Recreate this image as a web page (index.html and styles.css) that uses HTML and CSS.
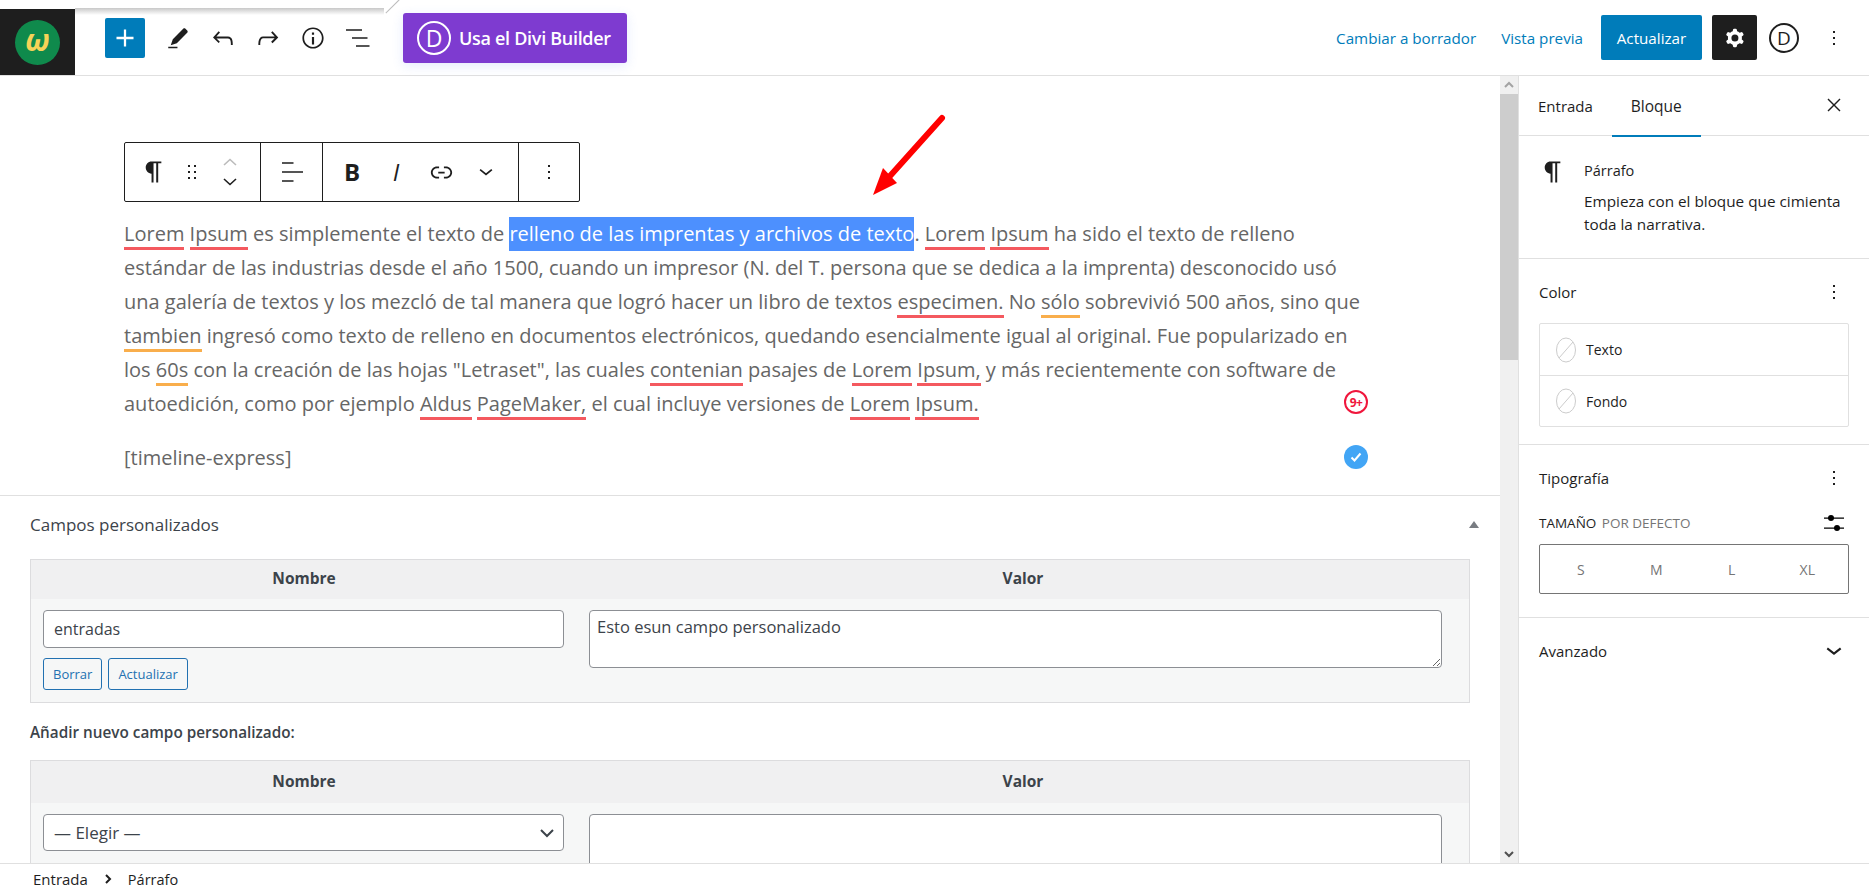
FILE: index.html
```html
<!DOCTYPE html>
<html lang="es">
<head>
    <meta charset="UTF-8">
    <title>Editar entrada</title>
    <link rel="stylesheet" href="styles.css">
</head>
<body>
    <div class="page">
        <!-- Top bar -->
        <header class="topbar">
            <div class="logo"><span class="logo-disc"><span class="logo-mark">ω</span></span></div>
            <button class="add-btn">
                <svg width="34" height="34" viewBox="0 0 24 24"><path d="M18 11.2h-5.2V6h-1.6v5.2H6v1.6h5.2V18h1.6v-5.2H18z"/></svg>
            </button>
            <div class="tools">
                <span class="tool"><svg width="26" height="26" viewBox="0 0 24 24"><path d="M3 21.500h8.500V20H3zM18.900 3.500c-.6-.6-1.500-.6-2.100 0L7.200 13.100l-1.900 5.600 5.600-1.900 9.600-9.600c.6-.6.6-1.500 0-2.100l-1.600-1.600z"/></svg></span>
                <span class="tool"><svg width="30" height="30" viewBox="0 0 24 24"><path d="M18.300 11.700c-.6-.6-1.400-.9-2.300-.9H6.700l2.900-3.300-1.100-1-4.500 5L8.500 16l1-1-2.700-2.700H16c.5 0 .9.2 1.300.5 1 1 1 3.400 1 4.500v.3h1.500v-.2c0-1.500 0-4.300-1.500-5.700z"/></svg></span>
                <span class="tool"><svg width="30" height="30" viewBox="0 0 24 24"><path d="M15.600 6.500l-1.100 1 2.900 3.300H8c-.9 0-1.700.3-2.300.9-1.400 1.500-1.400 4.200-1.400 5.600v.2h1.500v-.3c0-1.100 0-3.500 1-4.500.3-.3.7-.5 1.300-.5h9.200L14.500 15l1.100 1.100 4.600-4.600-4.600-5z"/></svg></span>
                <span class="tool"><svg width="26" height="26" viewBox="0 0 24 24"><path d="M12 2.200c-5.400 0-9.800 4.400-9.800 9.800s4.400 9.800 9.800 9.800 9.800-4.400 9.800-9.800-4.400-9.800-9.800-9.800zm0 18c-4.500 0-8.200-3.700-8.200-8.200S7.500 3.800 12 3.800s8.200 3.700 8.200 8.200-3.700 8.200-8.200 8.200zM11 18h2v-7h-2zm0-9h2V7h-2z"/></svg></span>
                <span class="tool"><svg width="24" height="24" viewBox="0 0 24 24"><path d="M0 3.200h16v1.600H0zM6 11.200h15.500v1.600H6zM10 19.200h13.500v1.600H10z"/></svg></span>
            </div>
            <button class="divi-btn"><span class="divi-d">D</span>Usa el Divi Builder</button>
            <div class="top-right">
                <a class="top-link">Cambiar a borrador</a>
                <a class="top-link preview">Vista previa</a>
                <button class="update-btn">Actualizar</button>
                <button class="gear-btn">
                    <svg width="28" height="28" viewBox="0 0 24 24"><path fill-rule="evenodd" d="M10.289 4.836A1 1 0 0111.275 4h1.306a1 1 0 01.987.836l.244 1.466c.787.26 1.503.679 2.108 1.218l1.393-.522a1 1 0 011.216.437l.653 1.13a1 1 0 01-.23 1.273l-1.148.944a6.025 6.025 0 010 2.435l1.149.946a1 1 0 01.23 1.272l-.653 1.13a1 1 0 01-1.216.437l-1.394-.522c-.605.54-1.32.958-2.108 1.218l-.244 1.466a1 1 0 01-.987.836h-1.306a1 1 0 01-.986-.836l-.244-1.466a5.995 5.995 0 01-2.108-1.218l-1.394.522a1 1 0 01-1.217-.436l-.653-1.131a1 1 0 01.23-1.272l1.149-.946a6.026 6.026 0 010-2.435l-1.148-.944a1 1 0 01-.23-1.272l.653-1.131a1 1 0 011.217-.437l1.393.522a5.994 5.994 0 012.108-1.218l.244-1.466zM14.929 12a3 3 0 11-6 0 3 3 0 016 0z"/></svg>
                </button>
                <span class="divi-small">D</span>
                <span class="top-more"><svg width="24" height="24" viewBox="0 0 24 24"><path d="M13 19h-2v-2h2v2zm0-6h-2v-2h2v2zm0-6h-2V5h2v2z"/></svg></span>
            </div>
        </header>

        <div class="workspace">
            <main class="editor">
                <div class="editor-scroll">
                    <section class="canvas">
                        <div class="block-toolbar">
                            <div class="tb-group tb-first">
                                <span class="tb-btn w38"><svg width="28" height="28" viewBox="0 0 24 24"><path d="M18.300 3H9.900c-2.900 0-5 2.300-5 5.200s2.100 5 5 5.200V21h1.700V4.600h2.300V21h1.700V4.600h2.700z"/></svg></span>
                                <span class="tb-btn w38"><svg width="24" height="24" viewBox="0 0 24 24"><path d="M8 5h2v2H8zM8 11h2v2H8zM8 17h2v2H8zM14 5h2v2h-2zM14 11h2v2h-2zM14 17h2v2h-2z"/></svg></span>
                                <span class="tb-movers">
                                    <svg width="18" height="10" viewBox="0 0 18 10"><path class="line-off" d="M3 8l6-5.500L15 8"/></svg>
                                    <svg width="18" height="10" viewBox="0 0 18 10"><path class="line-on" d="M3 2l6 5.500L15 2"/></svg>
                                </span>
                            </div>
                            <div class="tb-group tb-align">
                                <svg width="24" height="24" viewBox="0 0 24 24"><path d="M2 2.300h11.500v1.500H2zM2 11.300h21v1.500H2zM2 20.300h11.500v1.500H2z"/></svg>
                            </div>
                            <div class="tb-group tb-format">
                                <span class="tb-letter bold">B</span>
                                <span class="tb-letter italic">I</span>
                                <span class="tb-btn w46"><svg width="29" height="29" viewBox="0 0 24 24"><path d="M15.600 7H14v1.500h1.600c2 0 3.700 1.600 3.700 3.500s-1.700 3.500-3.700 3.500H14V17h1.600c2.800 0 5.200-2.200 5.200-5s-2.400-5-5.200-5zM4.700 12c0-1.900 1.700-3.500 3.700-3.500H10V7H8.400c-2.900 0-5.200 2.200-5.200 5s2.300 5 5.200 5H10v-1.500H8.400c-2 0-3.700-1.600-3.700-3.500zm4.600.800h5.300v-1.500H9.300z"/></svg></span>
                                <span class="tb-btn w44"><svg width="28" height="28" viewBox="0 0 24 24"><path d="M17.500 10.600L12 15l-5.500-4.400.9-1.200L12 13l4.500-3.600z"/></svg></span>
                            </div>
                            <div class="tb-group tb-last">
                                <svg width="24" height="24" viewBox="0 0 24 24"><path d="M13 19h-2v-2h2v2zm0-6h-2v-2h2v2zm0-6h-2V5h2v2z"/></svg>
                            </div>
                        </div>
                        <p class="para">
                            <span class="err">Lorem</span> <span class="err">Ipsum</span> es simplemente el texto de <span class="sel">relleno de las imprentas y archivos de texto</span>. <span class="err">Lorem</span> <span class="err">Ipsum</span> ha sido el texto de relleno<br>
                            estándar de las industrias desde el año 1500, cuando un impresor (N. del T. persona que se dedica a la imprenta) desconocido usó<br>
                            una galería de textos y los mezcló de tal manera que logró hacer un libro de textos <span class="err">especimen.</span> No <span class="warn">sólo</span> sobrevivió 500 años, sino que<br>
                            <span class="warn">tambien</span> ingresó como texto de relleno en documentos electrónicos, quedando esencialmente igual al original. Fue popularizado en<br>
                            los <span class="warn">60s</span> con la creación de las hojas "Letraset", las cuales <span class="err">contenian</span> pasajes de <span class="err">Lorem</span> <span class="err">Ipsum,</span> y más recientemente con software de<br>
                            autoedición, como por ejemplo <span class="err">Aldus</span> <span class="err">PageMaker,</span> el cual incluye versiones de <span class="err">Lorem</span> <span class="err">Ipsum.</span>
                        </p>
                        <p class="shortcode">[timeline-express]</p>

                        <span class="badge-count">9+</span>
                        <span class="badge-ok"><svg width="14" height="14" viewBox="0 0 14 14"><path d="M2.500 7.500l3 3 6-7"/></svg></span>
                        <svg class="arrow" width="90" height="100" viewBox="0 0 90 100"><path class="arrow-shaft" d="M78 12L26 70"/><path class="arrow-head" d="M9 89L19 62 33 77z"/></svg>
                    </section>

                    <section class="metabox">
                        <div class="meta-head">
                            <h2>Campos personalizados</h2>
                            <span class="meta-toggle"></span>
                        </div>
                        <div class="meta-table">
                            <div class="meta-cols meta-th"><div>Nombre</div><div>Valor</div></div>
                            <div class="meta-cols meta-row">
                                <div>
                                    <input class="field" type="text" value="entradas">
                                    <div class="row-btns">
                                        <button class="small-btn">Borrar</button>
                                        <button class="small-btn">Actualizar</button>
                                    </div>
                                </div>
                                <div><textarea class="area">Esto esun campo personalizado</textarea></div>
                            </div>
                        </div>
                        <p class="meta-add">Añadir nuevo campo personalizado:</p>
                        <div class="meta-table">
                            <div class="meta-cols meta-th th2"><div>Nombre</div><div>Valor</div></div>
                            <div class="meta-cols meta-row">
                                <div>
                                    <div class="field select">— Elegir —
                                        <svg width="20" height="20" viewBox="0 0 20 20"><path d="M4 7l6 6 6-6"/></svg>
                                    </div>
                                </div>
                                <div><textarea class="area"></textarea></div>
                            </div>
                        </div>
                    </section>
                </div>
                <div class="scrollbar">
                    <span class="sb-btn"><svg width="10" height="8" viewBox="0 0 10 8"><path class="sb-off" d="M1 6l4-4 4 4"/></svg></span>
                    <span class="sb-thumb"></span>
                    <span class="sb-track"></span>
                    <span class="sb-btn"><svg width="10" height="8" viewBox="0 0 10 8"><path d="M1 2l4 4 4-4"/></svg></span>
                </div>
            </main>

            <!-- Settings sidebar -->
            <aside class="sidebar">
                <div class="tabs">
                    <span class="tab">Entrada</span>
                    <span class="tab tab-active">Bloque</span>
                    <span class="tab-close"><svg width="24" height="24" viewBox="0 0 24 24"><path d="M13 12l5.500-5.500-1-1L12 11 6.500 5.500l-1 1L11 12l-5.500 5.500 1 1L12 13l5.500 5.500 1-1z"/></svg></span>
                </div>
                <div class="card">
                    <svg class="card-icon" width="28" height="28" viewBox="0 0 24 24"><path d="M18.300 3H9.900c-2.900 0-5 2.300-5 5.200s2.100 5 5 5.200V21h1.700V4.600h2.300V21h1.700V4.600h2.700z"/></svg>
                    <div>
                        <div class="card-title">Párrafo</div>
                        <div class="card-desc">Empieza con el bloque que cimienta toda la narrativa.</div>
                    </div>
                </div>
                <div class="panel panel-color">
                    <div class="panel-head">Color <svg width="24" height="24" viewBox="0 0 24 24"><path d="M13 19h-2v-2h2v2zm0-6h-2v-2h2v2zm0-6h-2V5h2v2z"/></svg></div>
                    <div class="color-box">
                        <div class="color-row"><svg class="swatch" width="22" height="26" viewBox="0 0 22 26"><ellipse cx="11" cy="13" rx="9.500" ry="12"/><path d="M4 21L18 5"/></svg>Texto</div>
                        <div class="color-row"><svg class="swatch" width="22" height="26" viewBox="0 0 22 26"><ellipse cx="11" cy="13" rx="9.500" ry="12"/><path d="M4 21L18 5"/></svg>Fondo</div>
                    </div>
                </div>
                <div class="panel panel-type">
                    <div class="panel-head">Tipografía <svg width="24" height="24" viewBox="0 0 24 24"><path d="M13 19h-2v-2h2v2zm0-6h-2v-2h2v2zm0-6h-2V5h2v2z"/></svg></div>
                    <div class="size-head">
                        <span>TAMAÑO <em>POR DEFECTO</em></span>
                        <svg width="20" height="16" viewBox="0 0 20 16"><path d="M0 2.500h20v1.200H0zM0 12.500h20v1.200H0z"/><circle cx="7" cy="3" r="3"/><circle cx="13" cy="13" r="3"/></svg>
                    </div>
                    <div class="sizes"><span>S</span><span>M</span><span>L</span><span>XL</span></div>
                </div>
                <div class="panel panel-adv">
                    <div class="panel-head">Avanzado <svg width="24" height="24" viewBox="3 3 18 18"><path d="M17.500 10.600L12 15l-5.500-4.400.9-1.200L12 13l4.500-3.600z"/></svg></div>
                </div>
            </aside>
        </div>

        <footer class="crumbs">
            <span>Entrada</span>
            <svg width="10" height="12" viewBox="0 0 10 12"><path d="M3 2l4 4-4 4"/></svg>
            <span class="crumb-current">Párrafo</span>
        </footer>

        <!-- Leftover edge of the captured window -->
        <div class="capture-strip"></div>
        <div class="capture-slash"></div>
    </div>
</body>
</html>
```

FILE: styles.css
```css
* {
    box-sizing: border-box;
}
html, body {
    height: 100%;
}
body {
    margin: 0;
    font-family: "Open Sans", sans-serif;
    font-size: 13px;
    color: #1e1e1e;
    background: #fff;
    overflow: hidden;
}
button {
    font-family: inherit;
    border: none;
    cursor: pointer;
}
svg {
    display: block;
    flex: none;
}
.page {
    position: relative;
    display: flex;
    flex-direction: column;
    height: 894px;
}

/* Top bar */
.topbar {
    flex: none;
    height: 76px;
    display: flex;
    align-items: center;
    border-bottom: 1px solid #e0e0e0;
}
.logo {
    align-self: flex-end;
    width: 75px;
    height: 66px;
    background: #1e1e1e;
    display: flex;
    align-items: center;
    justify-content: center;
}
.logo-disc {
    width: 45px;
    height: 45px;
    border-radius: 50%;
    background: #0f8a4c;
    display: flex;
    align-items: center;
    justify-content: center;
}
.logo-mark {
    color: #f6d358;
    font: italic bold 30px/1 "Open Sans", sans-serif;
    margin-top: -4px;
}
.add-btn {
    width: 40px;
    height: 40px;
    margin-left: 30px;
    padding: 0;
    border-radius: 2px;
    background: #007cba;
    display: flex;
    align-items: center;
    justify-content: center;
}
.add-btn svg {
    fill: #fff;
}
.tools {
    display: flex;
    align-items: center;
    margin-left: 10.5px;
}
.tool {
    width: 45px;
    display: flex;
    justify-content: center;
    fill: #1e1e1e;
}
.divi-btn {
    width: 224px;
    height: 50px;
    margin-left: 22.5px;
    padding: 0 0 0 14px;
    display: flex;
    align-items: center;
    gap: 8px;
    border-radius: 3px;
    background: #7e3bd0;
    color: #fff;
    font-size: 18px;
    font-weight: 600;
    letter-spacing: -0.3px;
    box-shadow: 0 3px 12px rgba(70, 110, 240, 0.14);
}
.divi-d {
    width: 34px;
    height: 34px;
    border: 2px solid #fff;
    border-radius: 50%;
    display: flex;
    align-items: center;
    justify-content: center;
    font-size: 23px;
    font-weight: 400;
}
.top-right {
    margin-left: auto;
    display: flex;
    align-items: center;
    padding-right: 23px;
}
.top-link {
    color: #007cba;
    font-size: 15.2px;
    margin-right: 25px;
}
.top-link.preview {
    margin-right: 18px;
}
.update-btn {
    width: 101px;
    height: 45px;
    border-radius: 2px;
    background: #007cba;
    color: #fff;
    font-size: 15.2px;
}
.gear-btn {
    width: 45px;
    height: 45px;
    margin-left: 10px;
    padding: 0;
    border-radius: 2px;
    background: #1e1e1e;
    fill: #fff;
    display: flex;
    align-items: center;
    justify-content: center;
}
.divi-small {
    width: 30px;
    height: 30px;
    margin-left: 12px;
    border: 2px solid #1e1e1e;
    border-radius: 50%;
    display: flex;
    align-items: center;
    justify-content: center;
    font-size: 19px;
}
.top-more {
    margin-left: 23px;
    fill: #1e1e1e;
}

/* Main area */
.workspace {
    flex: 1;
    min-height: 0;
    display: flex;
}
.editor {
    flex: none;
    width: 1518px;
    display: flex;
}
.editor-scroll {
    flex: 1;
    min-width: 0;
    overflow: hidden;
}
.canvas {
    position: relative;
    padding: 66px 0 0 124px;
    height: 420px;
    border-bottom: 1px solid #e0e0e0;
}
.block-toolbar {
    display: flex;
    width: 456px;
    height: 60px;
    border: 1px solid #1e1e1e;
    border-radius: 2px;
    fill: #1e1e1e;
}
.tb-group {
    display: flex;
    align-items: center;
    border-right: 1px solid #1e1e1e;
}
.tb-first {
    width: 136px;
    padding-left: 10px;
}
.tb-align {
    width: 62px;
    justify-content: center;
}
.tb-format {
    width: 196px;
    padding-left: 7px;
}
.tb-last {
    flex: 1;
    border-right: none;
    justify-content: center;
}
.tb-btn {
    display: flex;
    justify-content: center;
}
.w38 { width: 38px; }
.w46 { width: 46px; }
.w44 { width: 44px; }
.tb-movers {
    width: 38px;
    display: flex;
    flex-direction: column;
    align-items: center;
    gap: 10px;
}
.tb-movers path {
    fill: none;
    stroke-width: 1.6;
}
.line-off { stroke: #bbb; }
.line-on { stroke: #1e1e1e; }
.tb-letter {
    width: 44px;
    text-align: center;
    font-size: 24px;
    line-height: 1;
}
.tb-letter.bold { font-weight: 700; }
.tb-letter.italic { font-style: italic; }
.para, .shortcode {
    margin: 0;
    font-size: 20px;
    line-height: 34px;
    color: #666;
    white-space: nowrap;
}
.para {
    margin-top: 15px;
}
.shortcode {
    margin-top: 20px;
}
.err {
    border-bottom: 3px solid #f4595f;
}
.warn {
    border-bottom: 3px solid #f9ae4c;
}
.sel {
    background: #4d90fe;
    color: #fff;
    padding: 3px 0 4px;
}
.badge-count, .badge-ok {
    position: absolute;
    left: 1344px;
    width: 24px;
    height: 24px;
    border-radius: 50%;
    display: flex;
    align-items: center;
    justify-content: center;
}
.badge-count {
    top: 314px;
    border: 2px solid #f0163c;
    color: #f0163c;
    font-size: 12px;
    font-weight: 700;
    letter-spacing: -0.5px;
}
.badge-ok {
    top: 369px;
    background: #42a5f5;
}
.badge-ok path {
    fill: none;
    stroke: #fff;
    stroke-width: 2;
}
.arrow {
    position: absolute;
    left: 864px;
    top: 30px;
}
.arrow-shaft {
    fill: none;
    stroke: #f00;
    stroke-width: 6;
    stroke-linecap: round;
}
.arrow-head {
    fill: #f00;
}

/* Custom fields */
.metabox {
    padding: 0 30px;
}
.meta-head {
    height: 63px;
    display: flex;
    align-items: center;
    justify-content: space-between;
    padding-bottom: 6px;
    margin-right: -9px;
}
.meta-head h2 {
    margin: 0;
    font-size: 17px;
    font-weight: 500;
    color: #3c434a;
}
.meta-toggle {
    width: 0;
    height: 0;
    border-left: 5px solid transparent;
    border-right: 5px solid transparent;
    border-bottom: 7px solid #787c82;
}
.meta-table {
    border: 1px solid #dcdcde;
    background: #f6f7f7;
}
.meta-cols {
    display: grid;
    grid-template-columns: 546px 1fr;
}
.meta-th {
    height: 39px;
    padding-bottom: 3px;
    background: #f0f0f1;
    color: #3c434a;
    font-size: 15.5px;
    font-weight: 700;
    align-items: center;
    text-align: center;
}
.meta-th.th2 {
    height: 42px;
}
.meta-row {
    padding: 11px 27px 12px 12px;
    grid-template-columns: 521px 1fr;
    column-gap: 25px;
}
.field {
    display: block;
    width: 100%;
    height: 38px;
    padding: 0 10px;
    border: 1px solid #8c8f94;
    border-radius: 4px;
    background: #fff;
    color: #3c434a;
    font-family: inherit;
    font-size: 16px;
}
.select {
    display: flex;
    align-items: center;
    justify-content: space-between;
    height: 37px;
    padding-right: 6px;
    font-size: 17px;
}
.select path {
    fill: none;
    stroke: #3c434a;
    stroke-width: 2;
}
.row-btns {
    display: flex;
    gap: 6px;
    margin-top: 10px;
}
.small-btn {
    height: 32px;
    padding: 0 9px;
    border: 1px solid #2271b1;
    border-radius: 3px;
    background: #f6f7f7;
    color: #2271b1;
    font-size: 13px;
}
.area {
    display: block;
    width: 100%;
    height: 58px;
    padding: 4px 7px;
    border: 1px solid #8c8f94;
    border-radius: 4px;
    background: #fff;
    color: #3c434a;
    font-family: inherit;
    font-size: 16.5px;
}
.meta-add {
    margin: 22px 0 21px;
    font-size: 15.3px;
    line-height: 14px;
    font-weight: 600;
    color: #3c434a;
}

/* Scrollbar */
.scrollbar {
    flex: none;
    width: 18px;
    display: flex;
    flex-direction: column;
    background: #f0f0f0;
}
.sb-btn {
    flex: none;
    height: 18px;
    display: flex;
    align-items: center;
    justify-content: center;
}
.sb-btn path {
    fill: none;
    stroke: #505050;
    stroke-width: 2;
}
.sb-btn path.sb-off {
    stroke: #a3a3a3;
}
.sb-thumb {
    flex: none;
    height: 266px;
    background: #cdcdcd;
}
.sb-track {
    flex: 1;
}

/* Sidebar */
.sidebar {
    flex: 1;
    min-width: 0;
    border-left: 1px solid #e0e0e0;
}
.tabs {
    height: 60px;
    display: flex;
    align-items: center;
    position: relative;
    border-bottom: 1px solid #e0e0e0;
    font-size: 15px;
    font-weight: 500;
    padding-left: 19px;
}
.tab {
    line-height: 58px;
    margin-right: 38px;
}
.tab-active {
    position: relative;
    font-size: 15.5px;
    font-weight: 400;
}
.tab-active::after {
    content: "";
    position: absolute;
    left: -19px;
    right: -19px;
    bottom: -2px;
    height: 2px;
    background: #007cba;
}
.tab-close {
    margin-left: auto;
    margin-right: 23px;
    margin-top: -2px;
    fill: #1e1e1e;
}
.card {
    display: flex;
    gap: 17px;
    height: 123px;
    padding: 22px 18px 0 20px;
    border-bottom: 1px solid #e0e0e0;
}
.card-icon {
    fill: #1e1e1e;
}
.card-title {
    font-size: 14.5px;
    line-height: 26px;
}
.card-desc {
    margin-top: 6px;
    font-size: 15.3px;
    line-height: 23px;
}
.panel {
    padding: 0 20px;
    border-bottom: 1px solid #e0e0e0;
}
.panel-head {
    display: flex;
    align-items: center;
    justify-content: space-between;
    height: 24px;
    font-size: 15px;
    font-weight: 500;
    fill: #1e1e1e;
    margin-right: 3px;
}
.panel-color {
    height: 186px;
    padding-top: 21px;
}
.color-box {
    margin-top: 19px;
    border: 1px solid #e0e0e0;
    border-radius: 2px;
}
.color-row {
    display: flex;
    align-items: center;
    gap: 9px;
    height: 51px;
    padding-left: 15px;
    font-size: 14px;
}
.color-row + .color-row {
    border-top: 1px solid #e0e0e0;
}
.swatch ellipse {
    fill: #fff;
    stroke: #ccc;
}
.swatch path {
    stroke: #ccc;
}
.panel-type {
    height: 173px;
    padding-top: 21px;
}
.size-head {
    display: flex;
    align-items: center;
    justify-content: space-between;
    margin-top: 25px;
    margin-right: 5px;
    height: 16px;
    font-size: 13.5px;
    font-weight: 500;
}
.size-head em {
    font-style: normal;
    color: #757575;
    margin-left: 2px;
}
.sizes {
    display: grid;
    grid-template-columns: repeat(4, 1fr);
    height: 50px;
    margin-top: 13px;
    padding: 0 3px;
    align-items: center;
    text-align: center;
    border: 1px solid #757575;
    border-radius: 2px;
    color: #757575;
    font-size: 14px;
}
.panel-adv {
    border-bottom: none;
    padding-top: 21px;
}

/* Breadcrumb */
.crumbs {
    flex: none;
    height: 31px;
    display: flex;
    align-items: center;
    padding-left: 33px;
    border-top: 1px solid #e0e0e0;
    font-size: 15px;
}
.crumbs svg {
    margin: 0 15px 0 15px;
}
.crumbs path {
    fill: none;
    stroke: #1e1e1e;
    stroke-width: 2;
}
.crumb-current {
    font-size: 14.5px;
}

/* Screenshot edge */
.capture-strip {
    position: absolute;
    left: 75px;
    top: 8px;
    width: 309px;
    height: 7px;
    background: linear-gradient(#c8c8c8, #fff);
}
.capture-slash {
    position: absolute;
    left: 383px;
    top: 6px;
    width: 19px;
    height: 1px;
    background: #bdbdbd;
    transform: rotate(-45deg);
}
```
